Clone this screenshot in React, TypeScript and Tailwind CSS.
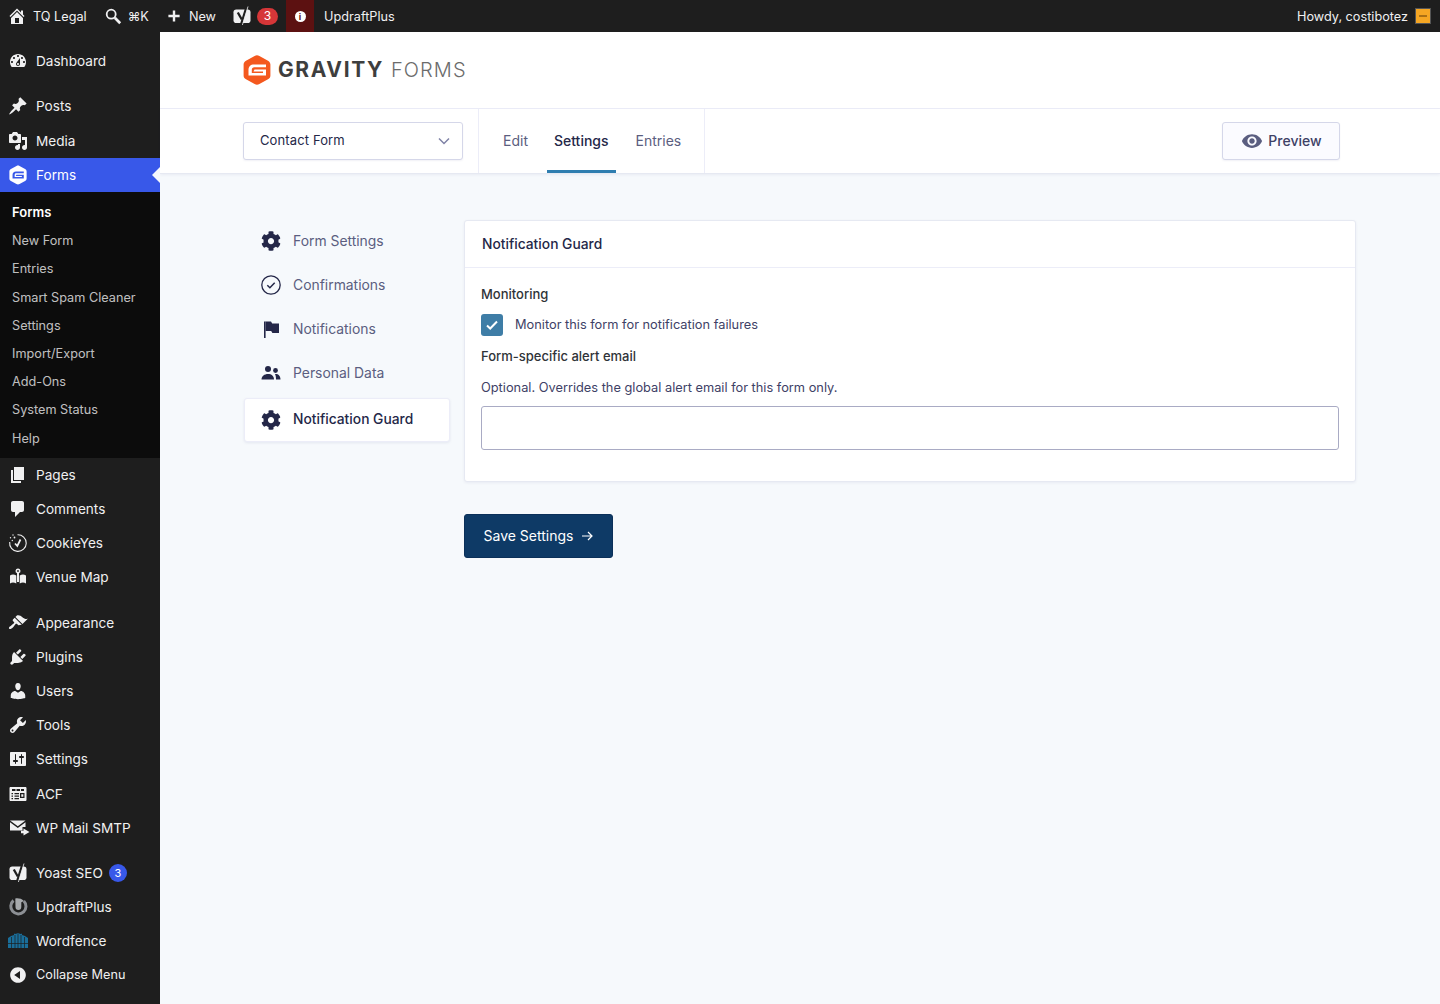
import type { ReactNode } from "react";
import { FaCog } from "react-icons/fa";

const P = {
  home: "M16 8.5l1.53 1.53-1.06 1.06L10 4.62l-6.47 6.47-1.06-1.06L10 2.5l4 4v-2h2v4zm-6-2.46l6 5.99V18H4v-5.97zM12 17v-5H8v5h4z",
  dashboard:
    "M3.76 16h12.48c1.1-1.37 1.76-3.11 1.76-5 0-4.42-3.58-8-8-8s-8 3.58-8 8c0 1.89.66 3.63 1.76 5zM10 4c.55 0 1 .45 1 1s-.45 1-1 1-1-.45-1-1 .45-1 1-1zM6 6c.55 0 1 .45 1 1s-.45 1-1 1-1-.45-1-1 .45-1 1-1zm8 0c.55 0 1 .45 1 1s-.45 1-1 1-1-.45-1-1 .45-1 1-1zm-5.37 5.55L12 7v6c0 1.1-.9 2-2 2s-2-.9-2-2c0-.57.24-1.08.63-1.45zM4 10c.55 0 1 .45 1 1s-.45 1-1 1-1-.45-1-1 .45-1 1-1zm12 0c.55 0 1 .45 1 1s-.45 1-1 1-1-.45-1-1 .45-1 1-1zm-5 3c0-.55-.45-1-1-1s-1 .45-1 1 .45 1 1 1 1-.45 1-1z",
  pin: "M10.44 3.02l1.82-1.82 6.36 6.35-1.83 1.82c-1.05-.68-2.48-.57-3.41.36l-.75.75c-.92.93-1.04 2.35-.35 3.41l-1.83 1.82-2.41-2.41-2.8 2.79c-.42.42-3.38 2.71-3.8 2.29s1.86-3.39 2.28-3.81l2.79-2.79L4.1 9.36l1.83-1.82c1.05.69 2.48.57 3.41-.36l.75-.75c.93-.92 1.05-2.35.35-3.41z",
  media:
    "M13 11V4c0-.55-.45-1-1-1h-1.67L9 1H5L3.67 3H2c-.55 0-1 .45-1 1v7c0 .55.45 1 1 1h10c.55 0 1-.45 1-1zM7 4.5c1.38 0 2.5 1.12 2.5 2.5S8.38 9.5 7 9.5 4.5 8.38 4.5 7 5.62 4.5 7 4.5zM14 6h5v10.5c0 1.38-1.12 2.5-2.5 2.5S14 17.88 14 16.5s1.12-2.5 2.5-2.5c.17 0 .34.02.5.05V9h-3V6zm-4 8.05V13h2v3.5c0 1.38-1.12 2.5-2.5 2.5S7 17.88 7 16.5 8.12 14 9.5 14c.17 0 .34.02.5.05z",
  page: "M6 15V2h10v13H6zm-1 1h8v2H3V5h2v11z",
  comments: "M5 2h9c1.1 0 2 .9 2 2v7c0 1.1-.9 2-2 2h-2l-5 5v-5H5c-1.1 0-2-.9-2-2V4c0-1.1.9-2 2-2z",
  appearance:
    "M14.48 11.06L7.41 3.99l1.5-1.5c.5-.56 2.3-.47 3.51.32 1.21.8 1.43 1.28 2.91 2.1 1.18.64 2.45 1.26 4.45.85zm-.71.71L6.7 4.7 4.93 6.47c-.39.39-.39 1.02 0 1.41l1.06 1.06c.39.39.39 1.03 0 1.42-.6.6-1.43 1.11-2.21 1.69-.35.26-.7.53-1.01.84C1.43 13.23.4 14.96 1.2 15.8c.82.82 2.57-.23 3.91-1.56.31-.31.58-.66.85-1.02.57-.79 1.09-1.62 1.69-2.21.39-.39 1.02-.39 1.41 0l1.06 1.06c.39.39 1.02.39 1.41 0z",
  plugins:
    "M13.11 4.36L9.87 7.6 8 5.73l3.24-3.24c.35-.34 1.05-.2 1.56.32.52.51.66 1.21.31 1.55zm-8 1.77l.91-1.12 9.01 9.01-1.19.84c-.71.71-2.63 1.16-3.82 1.16H6.14L4.9 17.26c-.59.59-1.54.59-2.12 0-.59-.58-.59-1.53 0-2.12l1.24-1.24v-3.88c0-1.13.4-3.19 1.09-3.89zm7.26 3.97l3.24-3.24c.34-.35 1.04-.21 1.55.31.52.51.66 1.21.31 1.55l-3.24 3.25z",
  users:
    "M10 9.25c-2.27 0-2.73-3.44-2.73-3.44C7 4.02 7.82 2 9.97 2c2.16 0 2.98 2.02 2.71 3.81 0 0-.41 3.44-2.68 3.44zm0 2.57L12.72 10c2.39 0 4.52 2.33 4.52 4.53v2.49s-3.65 1.13-7.24 1.13c-3.65 0-7.24-1.13-7.24-1.13v-2.49c0-2.25 1.94-4.48 4.47-4.48z",
  tools:
    "M16.68 9.77c-1.34 1.34-3.3 1.67-4.95.99l-5.41 6.52c-.99.99-2.59.99-3.58 0s-.99-2.59 0-3.57l6.52-5.42c-.68-1.65-.35-3.61.99-4.95 1.28-1.28 3.12-1.62 4.72-1.06l-2.89 2.89 2.82 2.82 2.86-2.87c.53 1.58.18 3.39-1.08 4.65zM3.81 16.21c.4.39 1.04.39 1.43 0 .4-.4.4-1.04 0-1.43-.39-.4-1.03-.4-1.43 0-.39.39-.39 1.03 0 1.43z",
  settings:
    "M18 16V4c0-.55-.45-1-1-1H3c-.55 0-1 .45-1 1v12c0 .55.45 1 1 1h14c.55 0 1-.45 1-1zM8 11h1c.55 0 1 .45 1 1s-.45 1-1 1H8v1.5c0 .28-.22.5-.5.5s-.5-.22-.5-.5V13H6c-.55 0-1-.45-1-1s.45-1 1-1h1V5.5c0-.28.22-.5.5-.5s.5.22.5.5V11zm5-2h-1c-.55 0-1-.45-1-1s.45-1 1-1h1V5.5c0-.28.22-.5.5-.5s.5.22.5.5V7h1c.55 0 1 .45 1 1s-.45 1-1 1h-1v5.5c0 .28-.22.5-.5.5s-.5-.22-.5-.5V9z",
  collapse: "M10 2.16c4.33 0 7.84 3.51 7.84 7.84s-3.51 7.84-7.84 7.84S2.16 14.33 2.16 10 5.71 2.16 10 2.16zm2 11.72V6.12L6.18 9.97z",
  plus: "M8.5 3h3v5.5H17v3h-5.5V17h-3v-5.5H3v-3h5.5z",
};

function Dash({ d, className = "w-5 h-5" }: { d: string; className?: string }) {
  return (
    <svg viewBox="0 0 20 20" className={className} fill="currentColor" fillRule="evenodd">
      <path d={d} />
    </svg>
  );
}

function YoastIcon() {
  return (
    <svg viewBox="0 0 20 20" className="w-5 h-5">
      <rect x="1.500" y="3.500" width="17" height="13.500" rx="2.800" fill="#f0f0f1" />
      <path d="M5.800 6.500 9.800 13.500" stroke="#1e1e1e" strokeWidth="2.300" fill="none" />
      <path d="M14.600 .8 9.200 18.200" stroke="#1e1e1e" strokeWidth="2.300" fill="none" />
      <path d="M16 .5 10.400 19" stroke="#f0f0f1" strokeWidth=".8" fill="none" />
    </svg>
  );
}

function GfHex({ fg, bg, className }: { fg: string; bg: string; className: string }) {
  return (
    <svg viewBox="0 0 28 30" className={className}>
      <path
        d="M11.600 1 3 5.800C1.400 6.700.6 8 .6 9.600v10.800c0 1.600.8 2.900 2.400 3.800l8.600 4.800c1.600.9 3.200.9 4.800 0l8.600-4.800c1.600-.9 2.400-2.200 2.400-3.800V9.600c0-1.600-.8-2.900-2.400-3.800L16.400 1c-1.600-.9-3.200-.9-4.800 0z"
        fill={bg}
      />
      <path
        d="M23 9.500H11C7.500 9.500 5.500 11.500 5.500 15V20.500H23V14.500H11.500L10.500 16.500H20V18H8.800V14.800C8.800 13.200 9.800 12.300 11.300 12.300H23z"
        fill={fg}
      />
    </svg>
  );
}

type Item = { label: string; icon: ReactNode; gap?: string; active?: boolean; badge?: string; small?: boolean };

const top: Item[] = [
  { label: "Dashboard", icon: <Dash d={P.dashboard} />, gap: "mt-3 mb-[11px]" },
  { label: "Posts", icon: <Dash d={P.pin} />, gap: "mb-px" },
  { label: "Media", icon: <Dash d={P.media} /> },
  { label: "Forms", icon: <GfHex fg="#3858e9" bg="#fff" className="w-[18px] h-5" />, active: true },
];

const middle: Item[] = [
  { label: "Pages", icon: <Dash d={P.page} /> },
  { label: "Comments", icon: <Dash d={P.comments} /> },
  {
    label: "CookieYes",
    icon: (
      <svg viewBox="0 0 20 20" className="w-5 h-5" fill="none" stroke="#f0f0f1" strokeWidth="1.100">
        <path d="M9.500 1.800A8.300 8.300 0 1 1 1.700 9" />
        <path d="M7 10.500 9.300 13 12.500 6.500" strokeWidth="1.700" />
        <g fill="#f0f0f1" stroke="none">
          <circle cx="5" cy="2" r=".7" />
          <circle cx="2.500" cy="4.800" r=".7" />
          <circle cx="6.500" cy="4.500" r=".9" />
          <circle cx="4.300" cy="7.500" r=".7" />
        </g>
      </svg>
    ),
  },
  {
    label: "Venue Map",
    icon: (
      <svg viewBox="0 0 20 20" className="w-5 h-5" fill="#f0f0f1">
        <path d="M2 8.500C4 7 6 7 8.300 8.500V16.500C6 15 4 15 2 16.500z" />
        <path d="M11.700 8.500C14 7 16 7 18 8.500V16.500C16 15 14 15 11.700 16.500z" />
        <path d="M10 1.500a2.500 2.500 0 0 1 1 4.800V15H9V6.300a2.500 2.500 0 0 1 1-4.800zm0 1.600a.9.9 0 1 0 0 1.800.9.9 0 0 0 0-1.800z" fillRule="evenodd" />
      </svg>
    ),
    gap: "mb-3",
  },
  { label: "Appearance", icon: <Dash d={P.appearance} /> },
  { label: "Plugins", icon: <Dash d={P.plugins} /> },
  { label: "Users", icon: <Dash d={P.users} /> },
  { label: "Tools", icon: <Dash d={P.tools} /> },
  { label: "Settings", icon: <Dash d={P.settings} />, gap: "mb-px" },
  {
    label: "ACF",
    icon: (
      <svg viewBox="0 0 20 20" className="w-5 h-5" fill="#f0f0f1" fillRule="evenodd">
        <path d="M2.500 3h15c.5 0 1 .5 1 1v12c0 .5-.5 1-1 1h-15c-.5 0-1-.5-1-1V4c0-.5.5-1 1-1zM4 5v2h3.500V5zm4.500 0v2H12V5zM13 5v2h3V5zM3.500 9v1.200H5V9zm3 0v1.200H11V9zM12 9v5h4.500V9zm1.300 1.300h2v2.400h-2zM3.500 11.500v1.200H5v-1.200zm3 0v1.200H11v-1.200zM3.500 14v1.200H5V14zm3 0v1.200H11V14z" />
      </svg>
    ),
  },
  {
    label: "WP Mail SMTP",
    icon: (
      <svg viewBox="0 0 20 20" className="ml-1 w-5 h-5" fill="#f0f0f1">
        <path d="M0 2.500h15.500L7.800 8.200z" />
        <path d="M0 4.200 7.800 10l7.700-5.800V9h-3v3.500H0z" />
        <path d="M13.500 10.500v2.200H11v2.600h2.500v2.200l6-3.500z" />
      </svg>
    ),
    gap: "mb-[11px]",
  },
  { label: "Yoast SEO", icon: <YoastIcon />, badge: "3" },
  {
    label: "UpdraftPlus",
    icon: (
      <svg viewBox="0 0 20 20" className="w-5 h-5">
        <path d="M5.500 3.500A7.600 7.600 0 1 0 15.800 4" fill="none" stroke="#8c8f94" strokeWidth="3" />
        <path d="M7.300 1.500C10 1 13.500 1.500 16 4l-2.700 1.300V10a2.900 2.900 0 0 1-5.800 0z" fill="#a7aaad" />
      </svg>
    ),
  },
  {
    label: "Wordfence",
    icon: (
      <svg viewBox="0 0 20 20" className="w-5 h-5" fill="#1a6e9a">
        <path d="M0 7 3 5 6 4V2.500l1 .5 3-.8 3 .8 1-.5V4l3 1 3 2v10H0z" />
        <path d="M3.500 6v11M7 4v13M10 3v14M13 4v13M16.500 6v11M0 12.500h20" stroke="#1e1e1e" strokeWidth=".7" fill="none" />
      </svg>
    ),
  },
  { label: "Collapse Menu", icon: <Dash d={P.collapse} />, small: true },
];

const sub = ["New Form", "Entries", "Smart Spam Cleaner", "Settings", "Import/Export", "Add-Ons", "System Status", "Help"];

function MenuRow({ item }: { item: Item }) {
  return (
    <div
      className={`relative flex h-[34px] items-center ${item.small ? "text-[12.700px]" : "text-[13.600px]"} ${
        item.active ? "bg-[#3858e9] text-white" : "text-[#f0f0f1]"
      } ${item.gap ?? ""}`}
    >
      <span className="flex w-9 shrink-0 justify-center">{item.icon}</span>
      <span>{item.label}</span>
      {item.badge && (
        <span className="ml-1.5 flex h-[18px] w-[18px] items-center justify-center rounded-full bg-[#3858e9] text-[11px] text-white">
          {item.badge}
        </span>
      )}
      {item.active && (
        <span className="absolute right-0 top-[9px] h-0 w-0 border-y-[8px] border-r-[8px] border-y-transparent border-r-[#f6f9fc]" />
      )}
    </div>
  );
}

function Sidebar() {
  return (
    <aside className="w-40 shrink-0 bg-[#1e1e1e]">
      {top.map((i) => (
        <MenuRow key={i.label} item={i} />
      ))}
      <div className="bg-[#0c0c0c] pb-[5.700px] pt-[6.500px] text-[12.700px] text-[#f0f0f1]/80">
        <div className="flex h-[28.200px] items-center pl-3 text-[13px] font-semibold text-white">Forms</div>
        {sub.map((s) => (
          <div key={s} className="flex h-[28.200px] items-center pl-3">
            {s}
          </div>
        ))}
      </div>
      {middle.map((i) => (
        <MenuRow key={i.label} item={i} />
      ))}
    </aside>
  );
}

function BarText({ children, className = "" }: { children: ReactNode; className?: string }) {
  return <span className={`mt-0.5 ${className}`}>{children}</span>;
}

function AdminBar() {
  return (
    <header className="flex h-8 items-center bg-[#1e1e1e] text-[12.700px] text-[#f0f0f1]">
      <span className="ml-[7px] mr-1.5">
        <Dash d={P.home} />
      </span>
      <BarText>TQ Legal</BarText>
      <svg viewBox="0 0 20 20" className="ml-[17px] h-[18px] w-[18px]" fill="none" stroke="#f0f0f1">
        <circle cx="8" cy="8" r="5" strokeWidth="2" />
        <path d="m12 12 6 6" strokeWidth="3" />
      </svg>
      <BarText className="ml-1.5">⌘K</BarText>
      <span className="ml-[17px]">
        <Dash d={P.plus} className="h-4 w-4" />
      </span>
      <BarText className="ml-[7px]">New</BarText>
      <span className="ml-4">
        <YoastIcon />
      </span>
      <span className="ml-[5px] flex h-[17px] w-[21px] items-center justify-center rounded-full bg-[#d63638] text-xs text-white">
        3
      </span>
      <span className="ml-2 flex h-8 w-7 items-center justify-center bg-[#5c1111]">
        <span className="flex h-[11px] w-[11px] items-center justify-center rounded-full bg-white text-[9px] font-bold leading-none text-[#5c1111]">
          i
        </span>
      </span>
      <BarText className="ml-2.5">UpdraftPlus</BarText>
      <BarText className="ml-auto">Howdy, costibotez</BarText>
      <span className="ml-[7px] mr-[9px] flex h-4 w-4 items-center justify-center border border-[#555] bg-[#f5a623]">
        <span className="h-[2px] w-2 bg-[#8a5a10]/70" />
      </span>
    </header>
  );
}

function Toolbar() {
  return (
    <div className="flex h-[65px] items-center border-b border-[#e6e9f2] bg-white pl-[83px] pr-[100px] shadow-[0_1px_3px_rgba(18,25,97,0.06)]">
      <div className="flex h-[38px] w-[220px] items-center justify-between rounded-[3px] border border-[#d5d7e9] bg-white pl-4 pr-3 text-[13px] tracking-[0.120px] text-[#242748] shadow-[0_1px_2px_rgba(18,25,97,0.06)]">
        Contact Form
        <svg viewBox="0 0 12 8" className="h-2 w-3" fill="none" stroke="#7f82a6" strokeWidth="1.500">
          <path d="m1 1.500 5 5 5-5" />
        </svg>
      </div>
      <nav className="ml-[15px] flex h-full gap-3 border-x border-[#ecedf8] pl-[17px] pr-[16px] text-sm text-[#5b5e80]">
        <span className="flex items-center px-[7px]">Edit</span>
        <span className="flex items-center border-b-[3px] border-[#2f7eb0] px-[7px] pt-[3px] font-medium text-[#242748]">
          Settings
        </span>
        <span className="ml-px flex items-center px-[7px]">Entries</span>
      </nav>
      <button className="ml-auto flex h-[38px] w-[118px] items-center justify-center gap-[5px] rounded-[3px] border border-[#d5d7e9] bg-[#fbfbff] pl-px text-sm font-medium text-[#3e4166] shadow-[0_1px_2px_rgba(18,25,97,0.06)]">
        <svg viewBox="0 0 24 24" className="h-[22px] w-[22px]" fill="#5b5e80">
          <path
            fillRule="evenodd"
            d="M12 4.500C7 4.500 2.730 7.610 1 12c1.730 4.390 6 7.500 11 7.500s9.270-3.110 11-7.500c-1.730-4.390-6-7.500-11-7.500zM12 17c-2.760 0-5-2.240-5-5s2.240-5 5-5 5 2.240 5 5-2.240 5-5 5zm0-8c-1.660 0-3 1.340-3 3s1.340 3 3 3 3-1.340 3-3-1.340-3-3-3z"
          />
        </svg>
        Preview
      </button>
    </div>
  );
}

function CheckCircle() {
  return (
    <svg viewBox="0 0 20 20" className="h-5 w-5" fill="none" stroke="#242748" strokeWidth="1.300">
      <circle cx="10" cy="10" r="9.200" />
      <path d="m6.300 10.300 2.600 2.500 4.800-5" strokeWidth="1.500" />
    </svg>
  );
}

function Flag() {
  return (
    <svg viewBox="0 0 20 20" className="h-5 w-5" fill="#242748">
      <path d="M3 2.500h1.600V19H3z" />
      <path d="M4.600 2.500h5.400l1.200 2H18V14h-6.600l-1.200-2H4.600z" />
    </svg>
  );
}

function People() {
  return (
    <svg viewBox="0 0 20 20" className="h-5 w-5" fill="#242748">
      <circle cx="7" cy="6" r="3" />
      <circle cx="14.500" cy="7.500" r="2.400" />
      <path d="M.500 16.500c0-3.400 3-5.500 6.500-5.500s6 2 6 5.500z" />
      <path d="M14 11c3.200-.3 5.500 1.700 5.500 5.500H15c0-2.200-.2-4-1-5.500z" />
    </svg>
  );
}

const nav = [
  { label: "Form Settings", icon: <FaCog className="h-5 w-5 text-[#242748]" /> },
  { label: "Confirmations", icon: <CheckCircle /> },
  { label: "Notifications", icon: <Flag /> },
  { label: "Personal Data", icon: <People /> },
];

export default function App() {
  return (
    <div className="flex min-h-screen flex-col bg-[#f6f9fc] font-[Inter,sans-serif]">
      <AdminBar />
      <div className="flex flex-1">
        <Sidebar />
        <main className="min-w-0 flex-1">
          <div className="flex h-[77px] items-center border-b border-[#ecedf8] bg-white pl-[83px]">
            <GfHex fg="#fff" bg="#f4581e" className="h-[30px] w-[28px]" />
            <span className="ml-[7px] text-[21px] font-bold tracking-[1.600px] text-[#3e3e3e]">GRAVITY</span>
            <span className="ml-[7px] text-[20px] font-light tracking-[1.100px] text-[#6b6b6b]">FORMS</span>
          </div>
          <Toolbar />
          <div className="flex gap-3.5 pl-[84px] pr-[84px] pt-[46px]">
            <div className="-mt-px w-[206px] shrink-0">
              {nav.map((n) => (
                <div key={n.label} className="flex h-11 items-center gap-3 pl-[17px] text-[13.900px] text-[#5b5e80]">
                  {n.icon}
                  {n.label}
                </div>
              ))}
              <div className="mt-[3px] flex h-11 items-center gap-3 rounded-[3px] border border-[#ecedf8] bg-white pb-px pl-4 text-[13.800px] font-medium text-[#242748] shadow-[0_1px_3px_rgba(18,25,97,0.08)]">
                <FaCog className="h-5 w-5 text-[#242748]" />
                Notification Guard
              </div>
            </div>
            <div className="flex-1">
              <section className="rounded-[3px] border border-[#e6e9f2] bg-white shadow-[0_1px_3px_rgba(18,25,97,0.06)]">
                <h2 className="flex h-[47px] items-center border-b border-[#ecedf8] pl-[17px] text-[13.800px] font-medium text-[#242748]">
                  Notification Guard
                </h2>
                <div className="px-4 pb-[31px] pt-[18px] text-[12.800px]">
                  <div className="text-[13px] font-medium leading-[16px] text-[#2f3338]">Monitoring</div>
                  <label className="mt-3 flex items-center gap-3 text-[#3e4166]">
                    <span className="flex h-[22px] w-[22px] items-center justify-center rounded-[3px] bg-[#3e7da6]">
                      <svg viewBox="0 0 14 14" className="h-3.5 w-3.5" fill="none" stroke="#fff" strokeWidth="2">
                        <path d="m2 7.500 3.200 3L12 3.500" />
                      </svg>
                    </span>
                    Monitor this form for notification failures
                  </label>
                  <div className="mt-3 text-[13px] font-medium leading-[16px] text-[#2f3338]">Form-specific alert email</div>
                  <p className="mt-4 leading-[16px] text-[#3e4166]">
                    Optional. Overrides the global alert email for this form only.
                  </p>
                  <input className="mt-2.5 block h-11 w-full rounded-[3px] border border-[#a9abc4] bg-white" />
                </div>
              </section>
              <button className="mt-8 flex h-11 w-[149px] items-center justify-center gap-2 rounded-[3px] border border-[#0b3059] bg-[#0e3a66] text-sm text-white">
                Save Settings
                <svg viewBox="0 0 12 12" className="h-3 w-3" fill="none" stroke="#fff" strokeWidth="1.200">
                  <path d="M1 6h10M7 2l4 4-4 4" />
                </svg>
              </button>
            </div>
          </div>
        </main>
      </div>
    </div>
  );
}
